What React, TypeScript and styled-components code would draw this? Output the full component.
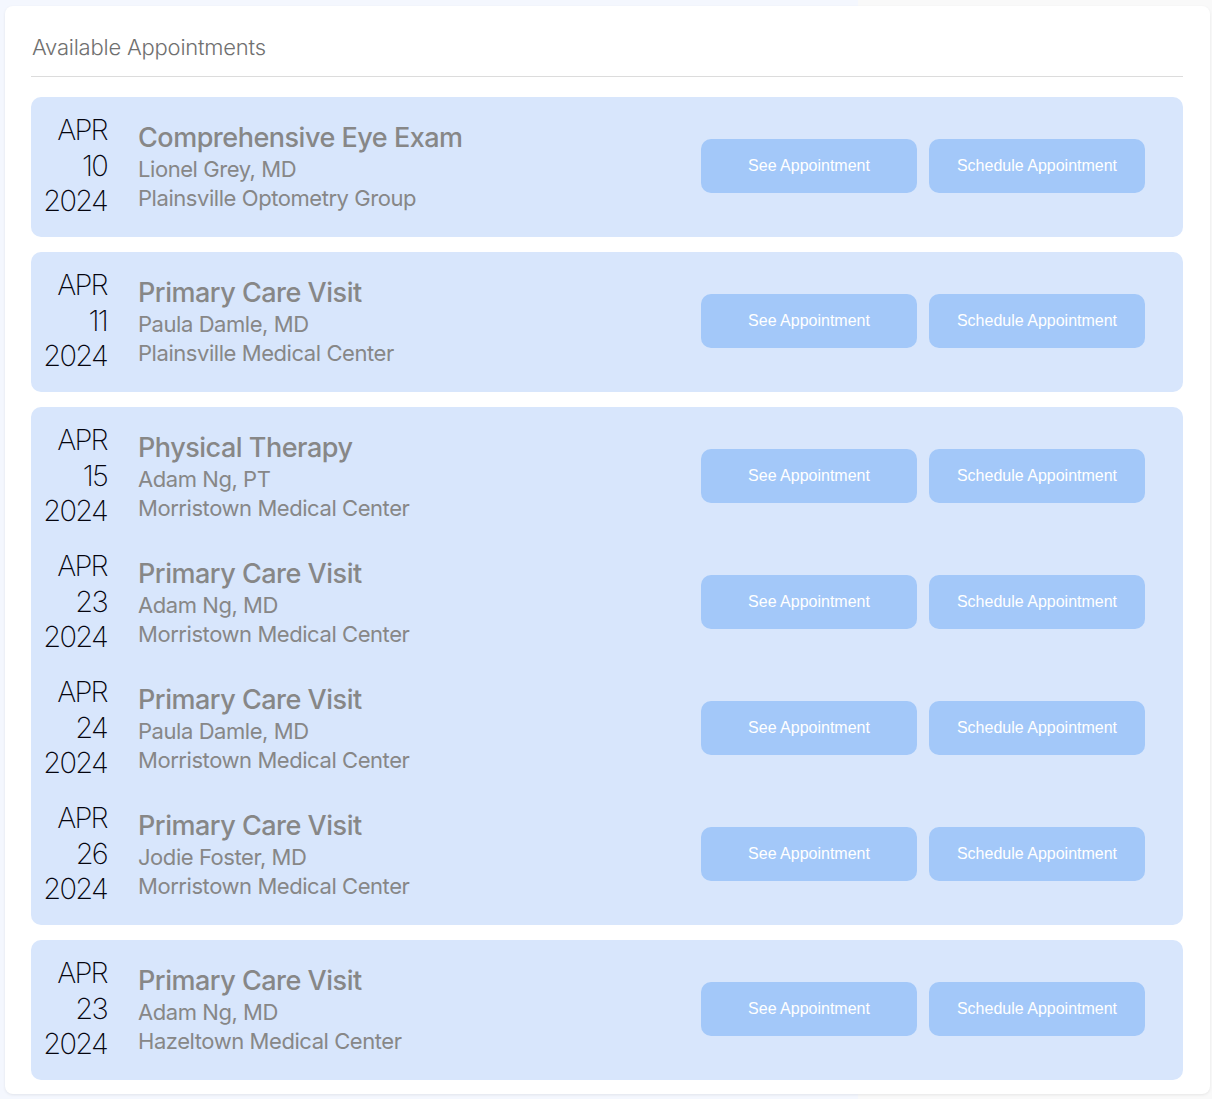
import styled, { createGlobalStyle } from "styled-components";

type Appointment = {
  month: string;
  day: string;
  year: string;
  title: string;
  provider: string;
  location: string;
};

const groups: Appointment[][] = [
  [
    {
      month: "APR",
      day: "10",
      year: "2024",
      title: "Comprehensive Eye Exam",
      provider: "Lionel Grey, MD",
      location: "Plainsville Optometry Group",
    },
  ],
  [
    {
      month: "APR",
      day: "11",
      year: "2024",
      title: "Primary Care Visit",
      provider: "Paula Damle, MD",
      location: "Plainsville Medical Center",
    },
  ],
  [
    {
      month: "APR",
      day: "15",
      year: "2024",
      title: "Physical Therapy",
      provider: "Adam Ng, PT",
      location: "Morristown Medical Center",
    },
    {
      month: "APR",
      day: "23",
      year: "2024",
      title: "Primary Care Visit",
      provider: "Adam Ng, MD",
      location: "Morristown Medical Center",
    },
    {
      month: "APR",
      day: "24",
      year: "2024",
      title: "Primary Care Visit",
      provider: "Paula Damle, MD",
      location: "Morristown Medical Center",
    },
    {
      month: "APR",
      day: "26",
      year: "2024",
      title: "Primary Care Visit",
      provider: "Jodie Foster, MD",
      location: "Morristown Medical Center",
    },
  ],
  [
    {
      month: "APR",
      day: "23",
      year: "2024",
      title: "Primary Care Visit",
      provider: "Adam Ng, MD",
      location: "Hazeltown Medical Center",
    },
  ],
];

const GlobalStyle = createGlobalStyle`
  html, body {
    margin: 0;
    padding: 0;
  }

  body {
    font-family: Inter, "Liberation Sans", sans-serif;
    background: linear-gradient(to right, #f4f7fe 858px, #f9f9f9 858px);
    min-height: 1099px;
  }

  * {
    box-sizing: border-box;
  }
`;

const Page = styled.div`
  padding: 6px 2px 6px 5px;
`;

const Card = styled.section`
  background: #ffffff;
  border-radius: 8px;
  box-shadow: 0 1px 3px rgba(0, 0, 0, 0.08);
  padding: 26px 27px 14px 26px;
`;

const Heading = styled.h2`
  margin: 0;
  padding: 0 0 14px 1px;
  font-size: 22px;
  line-height: 30px;
  font-weight: 300;
  letter-spacing: -0.01em;
  color: #707070;
  border-bottom: 1px solid #dcdcdc;
`;

const List = styled.div`
  display: flex;
  flex-direction: column;
  gap: 15px;
  margin-top: 20px;
`;

const Group = styled.div`
  background: #d8e6fc;
  border-radius: 10px;
  padding: 7px 38px 7px 0;
  display: flex;
  flex-direction: column;
`;

const Row = styled.div`
  display: flex;
  align-items: center;
  height: 126px;
`;

const DateCol = styled.div`
  width: 76px;
  flex-shrink: 0;
  display: flex;
  flex-direction: column;
  align-items: flex-end;
  padding-bottom: 3px;
  font-size: 29px;
  line-height: 35.5px;
  font-weight: 200;
  letter-spacing: -0.06em;
  color: #05050f;
`;

const Info = styled.div`
  flex: 1;
  margin-left: 31px;
  display: flex;
  flex-direction: column;
  color: #878787;
`;

const Title = styled.div`
  font-size: 27px;
  line-height: 34px;
  font-weight: 500;
  letter-spacing: -0.018em;
`;

const Detail = styled.div`
  font-size: 22px;
  line-height: 29px;
  font-weight: 400;
  letter-spacing: -0.02em;
`;

const Actions = styled.div`
  display: flex;
  gap: 12px;
  margin-top: -2px;
`;

const ActionButton = styled.button`
  width: 216px;
  height: 54px;
  border: none;
  border-radius: 10px;
  background: #a3c8f9;
  color: #ffffff;
  font-family: "Liberation Sans", Arial, sans-serif;
  font-size: 16px;
  cursor: pointer;
`;

function App() {
  return (
    <>
      <GlobalStyle />
      <Page>
        <Card>
          <Heading>Available Appointments</Heading>
          <List>
            {groups.map((group, gi) => (
              <Group key={gi}>
                {group.map((a, i) => (
                  <Row key={i}>
                    <DateCol>
                      <span>{a.month}</span>
                      <span>{a.day}</span>
                      <span>{a.year}</span>
                    </DateCol>
                    <Info>
                      <Title>{a.title}</Title>
                      <Detail>{a.provider}</Detail>
                      <Detail>{a.location}</Detail>
                    </Info>
                    <Actions>
                      <ActionButton>See Appointment</ActionButton>
                      <ActionButton>Schedule Appointment</ActionButton>
                    </Actions>
                  </Row>
                ))}
              </Group>
            ))}
          </List>
        </Card>
      </Page>
    </>
  );
}

export default App;
